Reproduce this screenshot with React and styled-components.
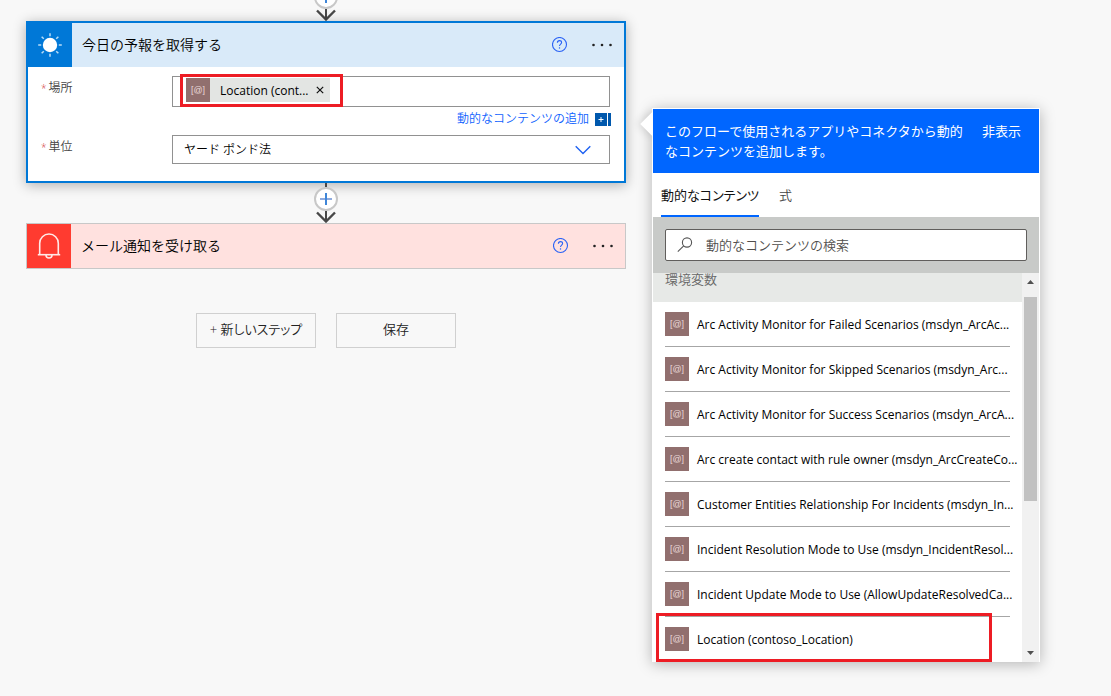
import React from "react";
import styled, { createGlobalStyle } from "styled-components";

const GlobalStyle = createGlobalStyle`
  *, *::before, *::after { box-sizing: border-box; }
  body {
    margin: 0;
    background: #f8f8f8;
    color: #000;
    font-family: "Open Sans", "Noto Sans CJK JP", sans-serif;
    font-size: 12px;
    line-height: 16px;
  }
  button, input, select { font: inherit; color: inherit; }
  button { padding: 0; border: 0; background: none; cursor: pointer; }
  ul { list-style: none; margin: 0; padding: 0; }
`;

const Page = styled.div`
  display: grid;
  grid-template-columns: minmax(0, 1fr) 388px;
  column-gap: 26px;
  align-items: start;
  padding: 0 71px 34px 26px;
`;

const Flow = styled.main`
  display: flex;
  flex-direction: column;
`;

const ConnectorBox = styled.div`
  display: flex;
  flex-direction: column;
  align-items: center;
  justify-content: flex-end;
  height: ${(p) => (p.$clipped ? 21 : 40)}px;
  overflow: hidden;
`;

const Stem = styled.span`
  flex: none;
  width: 2px;
  height: 4px;
  background: #484848;
`;

const AddButton = styled.button`
  flex: none;
  display: grid;
  place-items: center;
  width: 24px;
  height: 24px;
  border: 2px solid #c8c8c8;
  border-radius: 50%;
  background: #fff;
`;

const ArrowIcon = styled.svg`
  flex: none;
  display: block;
`;

const Card = styled.section`
  border: ${(p) => (p.$active ? "2px solid #0078d7" : "1px solid #c8c8c8")};
  background: #fff;
  box-shadow: ${(p) => (p.$active ? "0 2px 12px rgba(0, 0, 0, 0.3)" : "none")};
`;

const CardHeader = styled.header`
  display: flex;
  align-items: center;
  height: 44px;
  padding-right: 10px;
  background: ${(p) => p.$tint};
`;

const CardIcon = styled.span`
  display: grid;
  place-items: center;
  width: 44px;
  height: 44px;
  background: ${(p) => p.$color};
`;

const CardTitle = styled.h2`
  flex: 1;
  margin: 0;
  padding-left: 10px;
  font-size: 14px;
  font-weight: 350;
  line-height: 20px;
`;

const HelpButton = styled.button`
  display: grid;
  place-items: center;
  width: 16px;
  height: 16px;
  margin-right: 22px;
`;

const MoreButton = styled.button`
  display: grid;
  place-items: center;
  width: 24px;
  height: 24px;
`;

const Fields = styled.div`
  display: grid;
  grid-template-columns: 131px minmax(0, 1fr);
  padding: 9px 14px 17px 13px;
`;

const FieldLabel = styled.label`
  display: flex;
  gap: 2px;
  padding-top: 4px;
  color: #444;
  font-weight: 350;
`;

const Required = styled.span`
  color: #d13438;
  font-size: 10px;
`;

const TokenField = styled.div`
  position: relative;
  display: flex;
  height: 31px;
  padding: 1px 0 0 13px;
  border: 1px solid #919191;
  background: #fff;
`;

const Token = styled.span`
  display: flex;
  align-items: center;
  width: 144px;
  height: 24px;
  background: #e3e5e3;
`;

const TokenText = styled.span`
  flex: 1;
  padding: 1px 0 0 10px;
  white-space: nowrap;
`;

const TokenRemove = styled.button`
  display: grid;
  place-items: center;
  width: 20px;
  height: 24px;
`;

const TokenInput = styled.input`
  flex: 1;
  min-width: 0;
  height: 24px;
  border: 0;
  outline: 0;
  background: transparent;
`;

const Glyph = styled.span`
  flex: none;
  display: grid;
  place-items: center;
  width: 24px;
  height: 24px;
  background: #916f6e;
  color: #ead9d8;
  font-family: "Liberation Sans", sans-serif;
  font-size: 9px;
  font-weight: 400;
  line-height: 10px;
`;

const Highlight = styled.span`
  position: absolute;
  border: 3px solid #ed1c24;
  pointer-events: none;
`;

const TokenHighlight = styled(Highlight)`
  top: -3px;
  bottom: -1px;
  left: 7px;
  width: 163px;
`;

const RowHighlight = styled(Highlight)`
  top: -4px;
  bottom: -1px;
  left: -9px;
  right: 18px;
`;

const AddContent = styled.div`
  display: flex;
  justify-content: flex-end;
  align-items: center;
  gap: 6px;
  margin-right: -1px;
  padding: 4px 0 8px;
`;

const AddLink = styled.a`
  color: #0f62fe;
  font-weight: 350;
  text-decoration: none;
`;

const InsertButton = styled.button`
  display: flex;
  gap: 1px;
  height: 13px;
`;

const InsertPlus = styled.span`
  display: grid;
  place-items: center;
  width: 12px;
  height: 13px;
  background: #0058ad;
`;

const InsertBar = styled.span`
  width: 3px;
  height: 13px;
  background: #0058ad;
`;

const SelectBox = styled.div`
  display: grid;
  align-items: center;
  height: 29px;
  border: 1px solid #919191;
  background: #fff;
  & > * { grid-area: 1 / 1; }
  & > svg { justify-self: end; margin-right: 18px; pointer-events: none; }
`;

const Select = styled.select`
  appearance: none;
  width: 100%;
  height: 27px;
  padding: 0 40px 0 11px;
  border: 0;
  background: transparent;
  font-weight: 350;
`;

const Actions = styled.div`
  display: flex;
  justify-content: center;
  gap: 20px;
  margin-top: 44px;
`;

const ActionButton = styled.button`
  width: 120px;
  height: 35px;
  padding-bottom: 3px;
  border: 1px solid #d0d0d0;
  color: #222;
  font-size: 13px;
  font-weight: 350;
  font-feature-settings: "palt";
`;

const Panel = styled.aside`
  position: relative;
  margin-top: 108px;
  border: 1px solid #fff;
  border-bottom: 0;
  background: #fff;
  box-shadow: 0 2px 14px rgba(0, 0, 0, 0.28);
  font-size: 13px;
`;

const Pointer = styled.span`
  position: absolute;
  top: 6px;
  left: -9px;
  width: 18px;
  height: 18px;
  background: #fff;
  box-shadow: -2px 2px 8px rgba(0, 0, 0, 0.12);
  transform: rotate(45deg);
`;

const PanelHeader = styled.header`
  position: relative;
  display: flex;
  align-items: flex-start;
  justify-content: space-between;
  padding: 12px 18px 12px 12px;
  background: #0066ff;
  color: #fff;
  line-height: 20px;
`;

const PanelMessage = styled.p`
  width: 304px;
  margin: 0;
`;

const HideButton = styled.button`
  color: #fff;
  line-height: 20px;
`;

const PanelBody = styled.div`
  position: relative;
  background: #fff;
`;

const Tabs = styled.div`
  display: flex;
  gap: 20px;
  height: 44px;
  padding-left: 8px;
`;

const Tab = styled.button`
  height: 44px;
  border-top: 2px solid transparent;
  border-bottom: 2px solid ${(p) => (p.$selected ? "#0066ff" : "transparent")};
  color: ${(p) => (p.$selected ? "#111" : "#444")};
  font-size: 13px;
  font-weight: ${(p) => (p.$selected ? 400 : 350)};
  font-feature-settings: "palt";
`;

const SearchArea = styled.div`
  padding: 12px;
  background: #c8cac8;
`;

const SearchBox = styled.label`
  display: flex;
  align-items: center;
  gap: 13px;
  height: 32px;
  padding: 0 11px;
  border: 1px solid #605e5c;
  border-radius: 2px;
  background: #fff;
`;

const SearchInput = styled.input`
  flex: 1;
  min-width: 0;
  padding: 0;
  border: 0;
  outline: 0;
  background: transparent;
  font-weight: 350;
  &::placeholder { color: #504e4c; opacity: 1; }
`;

const Results = styled.div`
  display: flex;
`;

const ResultList = styled.div`
  flex: 1;
  min-width: 0;
`;

const GroupTitle = styled.h3`
  margin: 0;
  height: 29px;
  padding-left: 12px;
  background: #e7e9e7;
  color: #666;
  font-size: 13px;
  font-weight: 350;
  line-height: 13px;
`;

const Rows = styled.ul`
  padding: 0 12px;
`;

const Row = styled.li`
  position: relative;
  height: 45px;
  border-bottom: 1px solid #a6a6a6;
  &:last-child { border-bottom-color: transparent; }
`;

const RowButton = styled.button`
  display: flex;
  align-items: center;
  gap: 8px;
  width: 100%;
  height: 44px;
  font-size: 12px;
  font-weight: 500;
  text-align: left;
  white-space: nowrap;
`;

const RowName = styled.span`
  padding-top: 1px;
`;

const ScrollTrack = styled.div`
  display: flex;
  flex-direction: column;
  align-items: center;
  width: 17px;
  background: #f1f1f1;
`;

const ScrollThumb = styled.span`
  width: 13px;
  height: 204px;
  margin: 7px 0 auto;
  background: #c1c1c1;
`;

const ScrollArrow = styled.svg`
  flex: none;
  display: block;
`;

const items = [
  "Arc Activity Monitor for Failed Scenarios (msdyn_ArcAc...",
  "Arc Activity Monitor for Skipped Scenarios (msdyn_Arc...",
  "Arc Activity Monitor for Success Scenarios (msdyn_ArcA...",
  "Arc create contact with rule owner (msdyn_ArcCreateCo...",
  "Customer Entities Relationship For Incidents (msdyn_In...",
  "Incident Resolution Mode to Use (msdyn_IncidentResol...",
  "Incident Update Mode to Use (AllowUpdateResolvedCa...",
  "Location (contoso_Location)",
];

function Connector({ clipped }) {
  return (
    <ConnectorBox $clipped={clipped}>
      <Stem />
      <AddButton aria-label="ステップの追加">
        <svg width="14" height="14" viewBox="0 0 14 14" fill="none">
          <path d="M1 7h12" stroke="#8fabdf" strokeWidth="2" />
          <path d="M7 1v12" stroke="#3f86d8" strokeWidth="2" />
        </svg>
      </AddButton>
      <ArrowIcon width="20" height="12" viewBox="0 0 20 12" fill="none" stroke="#484848">
        <path d="M10 0v10" strokeWidth="2" />
        <path d="M1 1.500L10 10.500L19 1.500" strokeWidth="2.400" />
      </ArrowIcon>
    </ConnectorBox>
  );
}

function HeaderTools() {
  return (
    <>
      <HelpButton aria-label="ヘルプ">
        <svg width="16" height="16" viewBox="0 0 16 16" fill="none" stroke="#2a62f5">
          <circle cx="7.500" cy="7.500" r="7" strokeWidth="1.100" />
          <path d="M5.400 5.700c0-1.300.9-2.100 2.100-2.100s2.100.8 2.100 1.900c0 1.500-2.100 1.700-2.100 3.500" strokeWidth="1.100" />
          <path d="M7.500 10.300v1.300" strokeWidth="1.200" />
        </svg>
      </HelpButton>
      <MoreButton aria-label="その他">
        <svg width="22" height="4" viewBox="0 0 22 4" fill="#222">
          <circle cx="2.500" cy="2" r="1.300" />
          <circle cx="11" cy="2" r="1.300" />
          <circle cx="19.500" cy="2" r="1.300" />
        </svg>
      </MoreButton>
    </>
  );
}

function SunIcon() {
  return (
    <svg width="26" height="26" viewBox="0 0 26 26">
      <circle cx="13" cy="13" r="7.200" fill="#fff" />
      <g stroke="#b9dcf6" strokeWidth="1.500">
        {[0, 45, 90, 135, 180, 225, 270, 315].map((a) => (
          <path key={a} d="M13 1.200v3" transform={`rotate(${a} 13 13)`} />
        ))}
      </g>
    </svg>
  );
}

function BellIcon() {
  return (
    <svg width="24" height="28" viewBox="0 0 24 28" fill="none" stroke="#ffe9e7" strokeWidth="1.600">
      <path d="M2.700 22.700V11.300a9.300 9.300 0 0 1 18.600 0v11.400" />
      <path d="M.8 22.700h22.400" />
      <path d="M9 23a3 3 0 0 0 6 0" />
    </svg>
  );
}

export default function App() {
  return (
    <>
      <GlobalStyle />
      <Page>
        <Flow>
          <Connector clipped />
          <Card $active>
            <CardHeader $tint="#d9eaf9">
              <CardIcon $color="#0078d7"><SunIcon /></CardIcon>
              <CardTitle>今日の予報を取得する</CardTitle>
              <HeaderTools />
            </CardHeader>
            <Fields>
              <FieldLabel htmlFor="place"><Required>*</Required>場所</FieldLabel>
              <div>
                <TokenField>
                  <Token>
                    <Glyph>[@]</Glyph>
                    <TokenText>Location (cont...</TokenText>
                    <TokenRemove aria-label="削除">
                      <svg width="8" height="8" viewBox="0 0 8 8" stroke="#111" strokeWidth="1.200">
                        <path d="M.8.8l6.400 6.400M7.200.8L.8 7.200" />
                      </svg>
                    </TokenRemove>
                  </Token>
                  <TokenInput id="place" />
                  <TokenHighlight />
                </TokenField>
                <AddContent>
                  <AddLink href="#dynamic">動的なコンテンツの追加</AddLink>
                  <InsertButton aria-label="追加">
                    <InsertPlus>
                      <svg width="6" height="5" viewBox="0 0 6 5" stroke="#fff">
                        <path d="M.5 2.500h5M3 0v5" />
                      </svg>
                    </InsertPlus>
                    <InsertBar />
                  </InsertButton>
                </AddContent>
              </div>
              <FieldLabel htmlFor="unit"><Required>*</Required>単位</FieldLabel>
              <SelectBox>
                <Select id="unit" defaultValue="imperial">
                  <option value="imperial">ヤード ポンド法</option>
                </Select>
                <svg width="16" height="10" viewBox="0 0 16 10" fill="none" stroke="#1f62f2" strokeWidth="1.400">
                  <path d="M.7 1.200L8 8.500l7.300-7.300" />
                </svg>
              </SelectBox>
            </Fields>
          </Card>
          <Connector />
          <Card>
            <CardHeader $tint="#ffe1df">
              <CardIcon $color="#ff3b30"><BellIcon /></CardIcon>
              <CardTitle>メール通知を受け取る</CardTitle>
              <HeaderTools />
            </CardHeader>
          </Card>
          <Actions>
            <ActionButton>+ 新しいステップ</ActionButton>
            <ActionButton>保存</ActionButton>
          </Actions>
        </Flow>

        <Panel>
          <Pointer />
          <PanelHeader>
            <PanelMessage>このフローで使用されるアプリやコネクタから動的なコンテンツを追加します。</PanelMessage>
            <HideButton>非表示</HideButton>
          </PanelHeader>
          <PanelBody>
            <Tabs role="tablist">
              <Tab role="tab" aria-selected="true" $selected>動的なコンテンツ</Tab>
              <Tab role="tab" aria-selected="false">式</Tab>
            </Tabs>
            <SearchArea>
              <SearchBox>
                <svg width="16" height="16" viewBox="0 0 16 16" fill="none" stroke="#555" strokeWidth="1.100">
                  <circle cx="10" cy="5.500" r="4.600" />
                  <path d="M6.700 8.800L.8 14.700" />
                </svg>
                <SearchInput type="text" aria-label="検索" placeholder="動的なコンテンツの検索" />
              </SearchBox>
            </SearchArea>
            <Results>
              <ResultList>
                <GroupTitle>環境変数</GroupTitle>
                <Rows>
                  {items.map((name, i) => (
                    <Row key={name}>
                      <RowButton>
                        <Glyph>[@]</Glyph>
                        <RowName>{name}</RowName>
                      </RowButton>
                      {i === items.length - 1 && <RowHighlight />}
                    </Row>
                  ))}
                </Rows>
              </ResultList>
              <ScrollTrack>
                <ScrollArrow width="17" height="17" viewBox="0 0 17 17" fill="#505050">
                  <path d="M5 11l3.500-4 3.500 4z" />
                </ScrollArrow>
                <ScrollThumb />
                <ScrollArrow width="17" height="17" viewBox="0 0 17 17" fill="#505050">
                  <path d="M5 6l3.500 4L12 6z" />
                </ScrollArrow>
              </ScrollTrack>
            </Results>
          </PanelBody>
        </Panel>
      </Page>
    </>
  );
}
